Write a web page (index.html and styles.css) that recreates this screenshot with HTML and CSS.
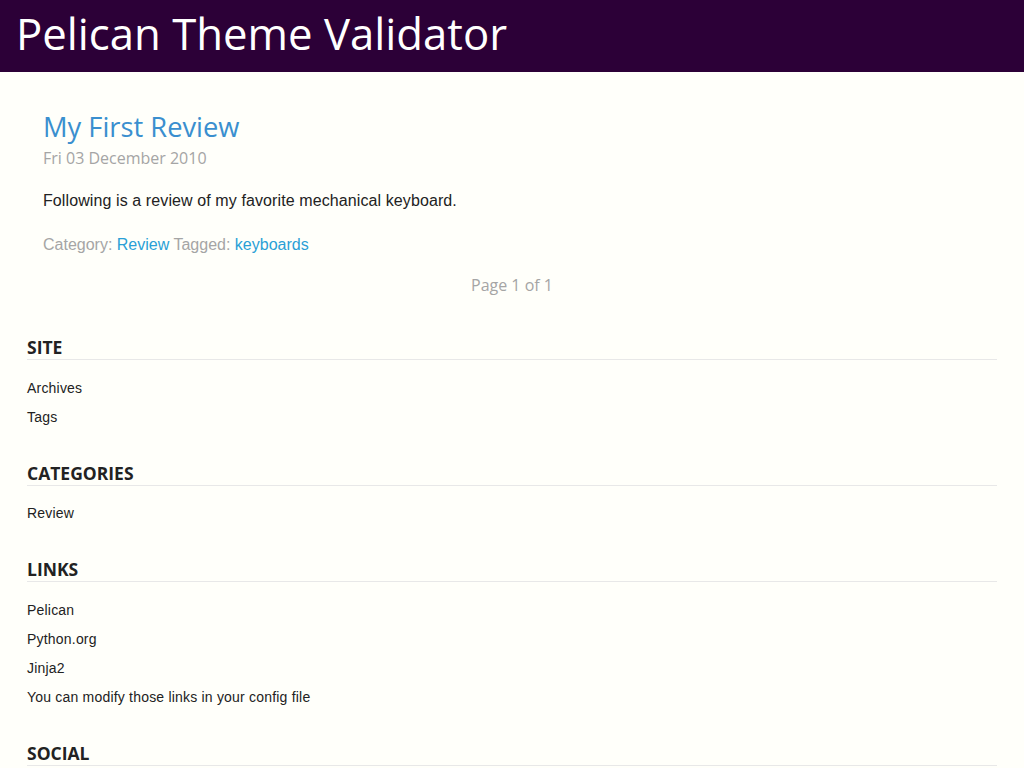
FILE: index.html
```html
<!DOCTYPE html>
<html>
<head>
<meta charset="utf-8">
<link rel="stylesheet" href="styles.css">
<title>Pelican Theme Validator</title>
</head>
<body>
<header class="banner">
  <h1 class="site-title">Pelican Theme Validator</h1>
</header>
<main class="content">
  <article class="post">
    <h2 class="post-title">My First Review</h2>
    <div class="post-date">Fri 03 December 2010</div>
    <p class="post-summary">Following is a review of my favorite mechanical keyboard.</p>
    <div class="post-meta">Category: <a href="#">Review</a> Tagged: <a href="#">keyboards</a></div>
  </article>
  <div class="pager">Page 1 of 1</div>
</main>
<aside class="sidebar">
  <section class="widget">
    <h3 class="widget-title">SITE</h3>
    <ul class="widget-list">
      <li>Archives</li>
      <li>Tags</li>
    </ul>
  </section>
  <section class="widget">
    <h3 class="widget-title">CATEGORIES</h3>
    <ul class="widget-list">
      <li>Review</li>
    </ul>
  </section>
  <section class="widget">
    <h3 class="widget-title">LINKS</h3>
    <ul class="widget-list">
      <li>Pelican</li>
      <li>Python.org</li>
      <li>Jinja2</li>
      <li>You can modify those links in your config file</li>
    </ul>
  </section>
  <section class="widget">
    <h3 class="widget-title">SOCIAL</h3>
  </section>
</aside>
</body>
</html>
```
FILE: styles.css
```css
html, body {
  margin: 0;
  padding: 0;
  background: #fffffa;
}
body {
  font-family: "Liberation Sans", Arial, sans-serif;
  color: #222;
}
.banner {
  background: #2c0037;
  height: 72px;
  box-sizing: border-box;
  padding: 0 16px 4px;
  display: flex;
  align-items: center;
}
.site-title {
  margin: 0;
  font-family: "Open Sans", sans-serif;
  font-weight: 400;
  font-size: 43.7px;
  color: #fff;
  line-height: 1;
}
.content {
  padding: 36px 43px 0;
}
.post-title {
  margin: 0;
  font-family: "Open Sans", sans-serif;
  font-weight: 400;
  font-size: 27.3px;
  line-height: 38px;
  color: #3a8fcf;
}
.post-date {
  font-family: "Open Sans", sans-serif;
  font-size: 16px;
  line-height: 24px;
  color: #a5a5a5;
}
.post-summary {
  margin: 19px 0 0;
  font-size: 16px;
  line-height: 24px;
  letter-spacing: 0.1px;
}
.post-meta {
  margin-top: 20px;
  font-size: 16px;
  line-height: 24px;
  color: #a5a5a5;
}
.post-meta a {
  color: #2a9fd6;
  text-decoration: none;
}
.pager {
  margin: 16px -43px 0;
  text-align: center;
  font-family: "Open Sans", sans-serif;
  font-size: 16px;
  line-height: 24px;
  color: #a5a5a5;
}
.sidebar {
  padding: 38px 27px 0;
}
.widget {
  margin-bottom: 29px;
}
.widget-title {
  margin: 0;
  font-family: "Open Sans", sans-serif;
  font-weight: 700;
  font-size: 17.5px;
  line-height: 24px;
  color: #222;
  padding-bottom: 0;
  border-bottom: 1px solid #e8e8e8;
}
.widget-list {
  list-style: none;
  margin: 13.6px 0 0;
  padding: 0;
}
.widget-list li {
  font-size: 14px;
  line-height: 29px;
  letter-spacing: 0.2px;
  color: #222;
}
```
